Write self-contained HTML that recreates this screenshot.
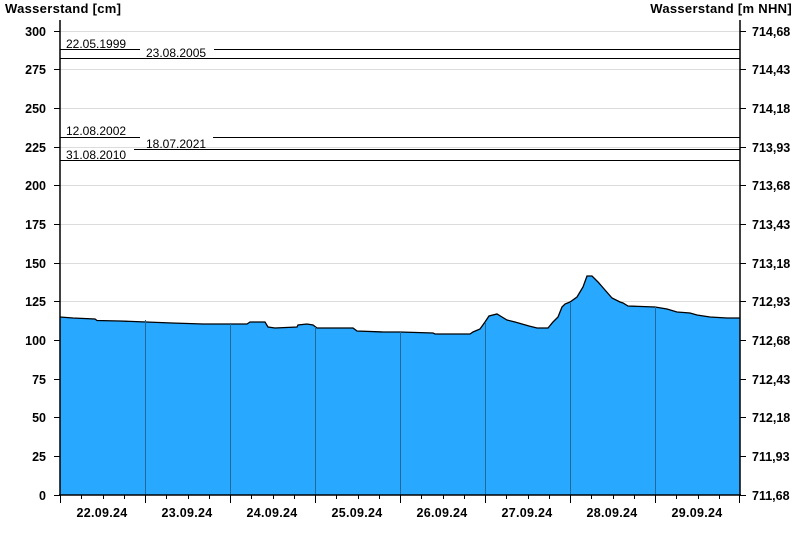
<!DOCTYPE html>
<html><head><meta charset="utf-8"><style>
html,body{margin:0;padding:0;background:#fff;}
svg{display:block;font-family:"Liberation Sans",Arial,sans-serif;}
.b{font-weight:bold;font-size:12.5px;fill:#000;}
.t{font-weight:bold;font-size:13px;fill:#000;letter-spacing:0.3px;}
.d{font-weight:bold;font-size:12.5px;fill:#000;letter-spacing:0.3px;}
.s{font-size:12px;fill:#000;}
</style></head><body>
<svg width="800" height="550" viewBox="0 0 800 550" xmlns="http://www.w3.org/2000/svg">
<rect width="800" height="550" fill="#fff"/>
<g stroke="#dcdcdc" stroke-width="1">
<line x1="60" y1="31.5" x2="740" y2="31.5"/><line x1="60" y1="69.5" x2="740" y2="69.5"/>
<line x1="60" y1="108.5" x2="740" y2="108.5"/><line x1="60" y1="147.5" x2="740" y2="147.5"/>
<line x1="60" y1="185.5" x2="740" y2="185.5"/><line x1="60" y1="224.5" x2="740" y2="224.5"/>
<line x1="60" y1="263.5" x2="740" y2="263.5"/><line x1="60" y1="301.5" x2="740" y2="301.5"/>
</g>
<path d="M60,495 L60,317 L73,318 L95,319 L97,320.5 L120,321 L172,323 L203,324 L247,324 L250,322 L265,322 L268,327 L275,328 L297,327 L298,325 L307,324 L313,325 L317,328 L353,328 L357,331 L383,332 L400,332 L433,333 L435,334 L470,334 L473,332 L480,329 L485,322 L489,316 L497,314 L502,317 L507,320 L515,322 L522,324 L529,326 L537,328 L548,328 L553,322 L558,317 L562,307 L565,304 L570,302 L577,297 L583,287 L587,276 L592,276 L598,282 L605,290 L612,298 L620,302 L623,303 L628,306 L655,307 L667,309 L677,312 L690,313 L697,315 L710,317 L727,318 L740,318 L740,495 Z" fill="#29a8ff" stroke="none"/>
<path d="M60,317 L73,318 L95,319 L97,320.5 L120,321 L172,323 L203,324 L247,324 L250,322 L265,322 L268,327 L275,328 L297,327 L298,325 L307,324 L313,325 L317,328 L353,328 L357,331 L383,332 L400,332 L433,333 L435,334 L470,334 L473,332 L480,329 L485,322 L489,316 L497,314 L502,317 L507,320 L515,322 L522,324 L529,326 L537,328 L548,328 L553,322 L558,317 L562,307 L565,304 L570,302 L577,297 L583,287 L587,276 L592,276 L598,282 L605,290 L612,298 L620,302 L623,303 L628,306 L655,307 L667,309 L677,312 L690,313 L697,315 L710,317 L727,318 L740,318" fill="none" stroke="#000" stroke-width="1.3"/>
<g stroke="#1f6a9a" stroke-width="1">
<line x1="145.5" y1="320" x2="145.5" y2="495"/><line x1="230.5" y1="323" x2="230.5" y2="495"/>
<line x1="315.5" y1="327" x2="315.5" y2="495"/><line x1="400.5" y1="332" x2="400.5" y2="495"/>
<line x1="485.5" y1="322" x2="485.5" y2="495"/><line x1="570.5" y1="302" x2="570.5" y2="495"/>
<line x1="655.5" y1="307" x2="655.5" y2="495"/>
</g>
<g stroke="#000" stroke-width="1">
<line x1="60" y1="49.5" x2="140" y2="49.5"/><line x1="214" y1="49.5" x2="740" y2="49.5"/>
<line x1="60" y1="58.5" x2="740" y2="58.5"/>
<line x1="60" y1="137.5" x2="140" y2="137.5"/><line x1="213" y1="137.5" x2="740" y2="137.5"/>
<line x1="134" y1="149.5" x2="740" y2="149.5"/>
<line x1="60" y1="160.5" x2="740" y2="160.5"/>
</g>
<text class="s" x="66" y="48">22.05.1999</text>
<text class="s" x="146" y="57">23.08.2005</text>
<text class="s" x="66" y="135">12.08.2002</text>
<text class="s" x="146" y="148">18.07.2021</text>
<text class="s" x="66" y="159">31.08.2010</text>
<g stroke="#000" stroke-width="1.5">
<line x1="60" y1="20" x2="60" y2="496"/><line x1="740" y1="20" x2="740" y2="496"/>
<line x1="59" y1="495" x2="741" y2="495"/>
</g>
<g stroke="#000" stroke-width="1">
<line x1="54" y1="31.5" x2="60" y2="31.5"/><line x1="54" y1="69.5" x2="60" y2="69.5"/><line x1="54" y1="108.5" x2="60" y2="108.5"/><line x1="54" y1="147.5" x2="60" y2="147.5"/><line x1="54" y1="185.5" x2="60" y2="185.5"/><line x1="54" y1="224.5" x2="60" y2="224.5"/><line x1="54" y1="263.5" x2="60" y2="263.5"/><line x1="54" y1="301.5" x2="60" y2="301.5"/><line x1="54" y1="340.5" x2="60" y2="340.5"/><line x1="54" y1="379.5" x2="60" y2="379.5"/><line x1="54" y1="417.5" x2="60" y2="417.5"/><line x1="54" y1="456.5" x2="60" y2="456.5"/><line x1="54" y1="495.5" x2="60" y2="495.5"/>
<line x1="740" y1="31.5" x2="746" y2="31.5"/><line x1="740" y1="69.5" x2="746" y2="69.5"/><line x1="740" y1="108.5" x2="746" y2="108.5"/><line x1="740" y1="147.5" x2="746" y2="147.5"/><line x1="740" y1="185.5" x2="746" y2="185.5"/><line x1="740" y1="224.5" x2="746" y2="224.5"/><line x1="740" y1="263.5" x2="746" y2="263.5"/><line x1="740" y1="301.5" x2="746" y2="301.5"/><line x1="740" y1="340.5" x2="746" y2="340.5"/><line x1="740" y1="379.5" x2="746" y2="379.5"/><line x1="740" y1="417.5" x2="746" y2="417.5"/><line x1="740" y1="456.5" x2="746" y2="456.5"/><line x1="740" y1="495.5" x2="746" y2="495.5"/>
</g>
<g stroke="#000" stroke-width="1">
<line x1="60.5" y1="495" x2="60.5" y2="503"/><line x1="145.5" y1="495" x2="145.5" y2="503"/><line x1="230.5" y1="495" x2="230.5" y2="503"/><line x1="315.5" y1="495" x2="315.5" y2="503"/><line x1="400.5" y1="495" x2="400.5" y2="503"/><line x1="485.5" y1="495" x2="485.5" y2="503"/><line x1="570.5" y1="495" x2="570.5" y2="503"/><line x1="655.5" y1="495" x2="655.5" y2="503"/><line x1="739.5" y1="495" x2="739.5" y2="503"/>
<line x1="81.5" y1="495" x2="81.5" y2="499"/><line x1="103.5" y1="495" x2="103.5" y2="499"/><line x1="124.5" y1="495" x2="124.5" y2="499"/>
<line x1="166.5" y1="495" x2="166.5" y2="499"/><line x1="188.5" y1="495" x2="188.5" y2="499"/><line x1="209.5" y1="495" x2="209.5" y2="499"/>
<line x1="251.5" y1="495" x2="251.5" y2="499"/><line x1="273.5" y1="495" x2="273.5" y2="499"/><line x1="294.5" y1="495" x2="294.5" y2="499"/>
<line x1="336.5" y1="495" x2="336.5" y2="499"/><line x1="358.5" y1="495" x2="358.5" y2="499"/><line x1="379.5" y1="495" x2="379.5" y2="499"/>
<line x1="421.5" y1="495" x2="421.5" y2="499"/><line x1="443.5" y1="495" x2="443.5" y2="499"/><line x1="464.5" y1="495" x2="464.5" y2="499"/>
<line x1="506.5" y1="495" x2="506.5" y2="499"/><line x1="528.5" y1="495" x2="528.5" y2="499"/><line x1="549.5" y1="495" x2="549.5" y2="499"/>
<line x1="591.5" y1="495" x2="591.5" y2="499"/><line x1="613.5" y1="495" x2="613.5" y2="499"/><line x1="634.5" y1="495" x2="634.5" y2="499"/>
<line x1="676.5" y1="495" x2="676.5" y2="499"/><line x1="698.5" y1="495" x2="698.5" y2="499"/><line x1="719.5" y1="495" x2="719.5" y2="499"/>
</g>
<text class="t" x="5" y="13">Wasserstand [cm]</text>
<text class="t" x="792" y="13" text-anchor="end">Wasserstand [m NHN]</text>
<g class="b" text-anchor="end">
<text x="46" y="36">300</text><text x="46" y="74">275</text><text x="46" y="113">250</text><text x="46" y="152">225</text><text x="46" y="190">200</text><text x="46" y="229">175</text><text x="46" y="268">150</text><text x="46" y="306">125</text><text x="46" y="345">100</text><text x="46" y="384">75</text><text x="46" y="422">50</text><text x="46" y="461">25</text><text x="46" y="500">0</text>
</g>
<g class="b">
<text x="752" y="36">714,68</text><text x="752" y="74">714,43</text><text x="752" y="113">714,18</text><text x="752" y="152">713,93</text><text x="752" y="190">713,68</text><text x="752" y="229">713,43</text><text x="752" y="268">713,18</text><text x="752" y="306">712,93</text><text x="752" y="345">712,68</text><text x="752" y="384">712,43</text><text x="752" y="422">712,18</text><text x="752" y="461">711,93</text><text x="752" y="500">711,68</text>
</g>
<g class="d" text-anchor="middle">
<text x="102" y="517">22.09.24</text><text x="187" y="517">23.09.24</text><text x="272" y="517">24.09.24</text><text x="357" y="517">25.09.24</text><text x="442" y="517">26.09.24</text><text x="527" y="517">27.09.24</text><text x="612" y="517">28.09.24</text><text x="697" y="517">29.09.24</text>
</g>
</svg>
</body></html>
